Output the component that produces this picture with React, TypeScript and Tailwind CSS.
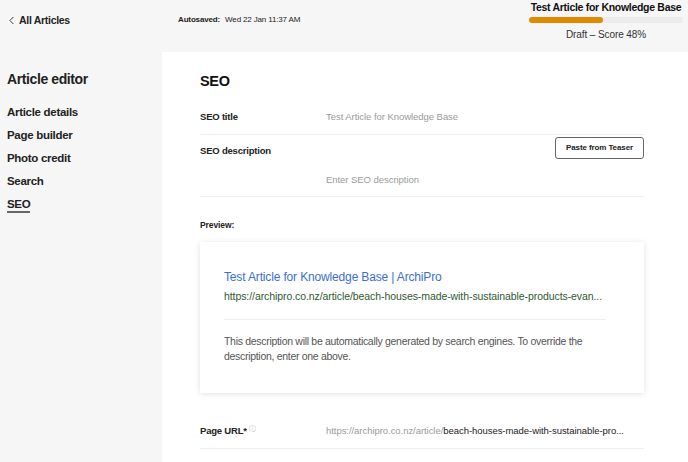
import { ChevronLeft } from 'lucide-react';

const navItems = ['Article details', 'Page builder', 'Photo credit', 'Search', 'SEO'];

function Header() {
  return (
    <div className="flex h-[52px] items-start bg-[#f6f6f6]">
      <div className="flex w-[162px] items-center gap-[1px] pl-[5px] pt-[13px]">
        <ChevronLeft className="h-[13px] w-[13px] text-[#333]" strokeWidth={1.8} />
        <span className="text-[10.5px] font-bold tracking-[-0.3px] text-[#222]">All Articles</span>
      </div>
      <div className="flex flex-1 items-center gap-[5px] pl-[16px] pt-[14px] text-[8px] tracking-[-0.15px] text-[#222]">
        <span className="font-bold">Autosaved:</span>
        <span>Wed 22 Jan 11:37 AM</span>
      </div>
      <div className="mr-[5px] flex w-[154px] flex-col items-center">
        <span className="whitespace-nowrap text-[10.5px] font-bold leading-[14px] tracking-[-0.3px] text-[#111]">
          Test Article for Knowledge Base
        </span>
        <div className="mt-[3px] h-[6px] w-full rounded-full bg-[#ececec]">
          <div className="h-full w-[48%] rounded-full bg-[#e08a00]" />
        </div>
        <span className="mt-[5px] whitespace-nowrap text-[10px] leading-[13px] tracking-[-0.1px] text-[#333]">
          Draft – Score 48%
        </span>
      </div>
    </div>
  );
}

function Sidebar() {
  return (
    <div className="w-[162px] shrink-0 bg-[#f6f6f6] pl-[7px] pt-[18px]">
      <div className="text-[14px] font-semibold leading-[18px] tracking-[-0.4px] text-[#222]">Article editor</div>
      <ul className="mt-[15px] flex flex-col gap-[5px]">
        {navItems.map((item) => (
          <li
            key={item}
            className="h-[18px] text-[11.5px] font-semibold leading-[18px] tracking-[-0.3px] text-[#222]"
          >
            <span className={item === 'SEO' ? 'border-b-2 border-[#666] pb-[1px]' : ''}>{item}</span>
          </li>
        ))}
      </ul>
    </div>
  );
}

function Row({ label, children }: { label: React.ReactNode; children: React.ReactNode }) {
  return (
    <div className="flex h-[34px] items-center border-b border-[#eeeeee]">
      <div className="w-[126px] text-[9.5px] font-bold tracking-[-0.2px] text-[#222]">{label}</div>
      <div className="min-w-0 flex-1 truncate text-[9.5px] tracking-[-0.05px] text-[#9a9a9a]">{children}</div>
    </div>
  );
}

function Main() {
  return (
    <div className="min-w-0 flex-1 bg-white pl-[38px] pr-[44px] pt-[19px]">
      <h1 className="text-[14.5px] font-bold leading-[20px] tracking-[-0.3px] text-[#111]">SEO</h1>
      <div className="mt-[10px]">
        <Row label="SEO title">Test Article for Knowledge Base</Row>
        <div className="flex h-[62px] flex-col border-b border-[#eeeeee]">
          <div className="flex items-start justify-between pt-[2px]">
            <span className="mt-[8px] text-[9.5px] font-bold leading-[12px] tracking-[-0.2px] text-[#222]">
              SEO description
            </span>
            <button className="h-[22px] w-[89px] rounded-[3px] border border-[#666] bg-white text-[8px] font-bold tracking-[-0.1px] text-[#222]">
              Paste from Teaser
            </button>
          </div>
          <div className="mt-[14px] pl-[126px] text-[9.5px] tracking-[-0.05px] text-[#9a9a9a]">
            Enter SEO description
          </div>
        </div>
      </div>
      <div className="mt-[22px] text-[8.5px] font-bold leading-[12px] tracking-[-0.1px] text-[#222]">Preview:</div>
      <div className="mt-[11px] h-[151px] bg-white pl-[24px] pr-[38px] pt-[27px] shadow-[0_1px_6px_rgba(0,0,0,0.12)]">
        <div className="text-[12px] leading-[17px] tracking-[-0.15px] text-[#3a6fd6]">
          Test Article for Knowledge Base | ArchiPro
        </div>
        <div className="mt-[3px] whitespace-nowrap text-[10.5px] leading-[14px] tracking-[-0.08px] text-[#2d5a2f]">
          https://archipro.co.nz/article/beach-houses-made-with-sustainable-products-evan...
        </div>
        <div className="mt-[16px] border-t border-[#eeeeee]" />
        <p className="mt-[14px] text-[10.5px] leading-[15px] tracking-[-0.3px] text-[#555]">
          This description will be automatically generated by search engines. To override the description, enter one above.
        </p>
      </div>
      <div className="mt-[22px]">
        <Row
          label={
            <span>
              Page URL*<sup className="ml-[2px] text-[7px] font-normal text-[#bbb]">ⓘ</sup>
            </span>
          }
        >
          <span className="text-[#9a9a9a]">https://archipro.co.nz/article/</span>
          <span className="text-[#222]">beach-houses-made-with-sustainable-pro...</span>
        </Row>
      </div>
    </div>
  );
}

export default function App() {
  return (
    <div className="h-[462px] w-[688px] overflow-hidden bg-white font-['Liberation_Sans',Arial,sans-serif]">
      <Header />
      <div className="flex h-[410px]">
        <Sidebar />
        <Main />
      </div>
    </div>
  );
}
